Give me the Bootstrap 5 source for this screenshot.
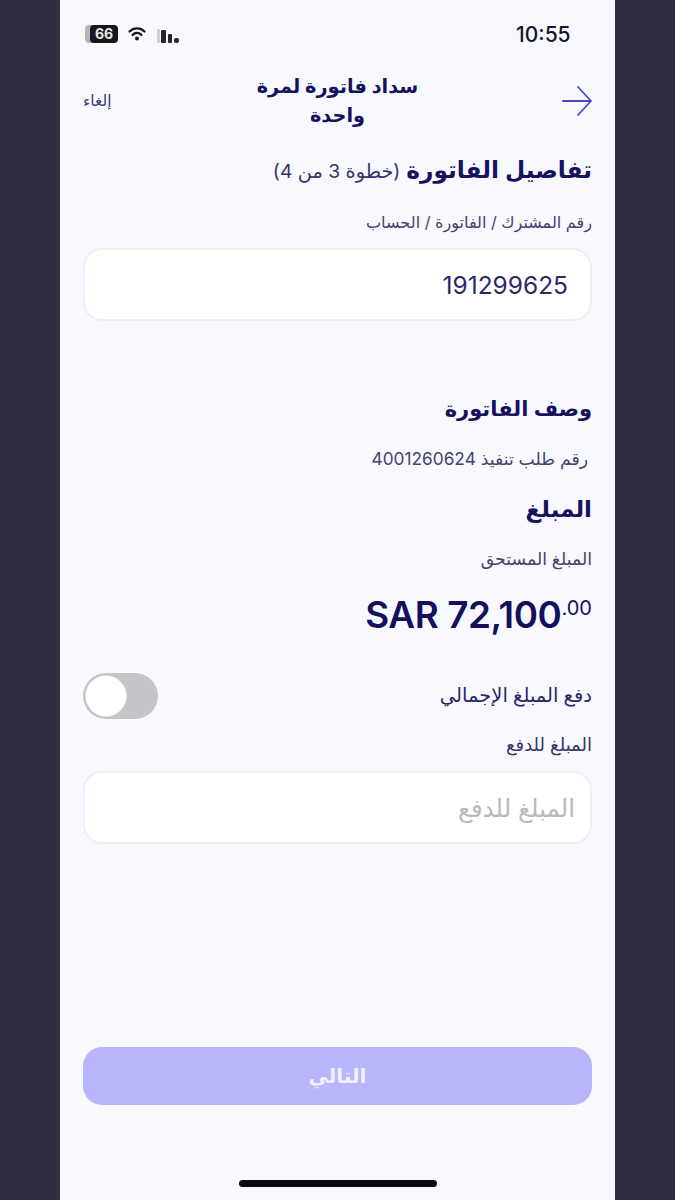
<!DOCTYPE html>
<html lang="ar" dir="rtl">
<head>
  <meta charset="UTF-8">
  <title>سداد فاتورة لمرة واحدة</title>
  <link href="https://cdn.jsdelivr.net/npm/bootstrap@5.3.0/dist/css/bootstrap.min.css" rel="stylesheet">
  <style>
    body { background: #2f2e41; font-family: Inter, "DejaVu Sans", sans-serif; color: #17125e; }
    .phone { width: 555px; height: 1200px; margin: 0 auto; background: #f8f9ff; padding: 0 23px; }
    .status-bar { height: 68px; direction: ltr; }
    .clock { font-size: 21px; font-weight: 500; color: #16162a; width: 76px; margin-top: 1px; }
    .top-head { height: 65px; }
    .back-arrow { width: 30px; flex: none; }
    .page-title { font-size: 19.3px; font-weight: 600; line-height: 29px; width: 190px; text-align: center; margin: 0 auto; }
    .cancel-link { font-size: 15.5px; color: #3d3a74; width: 30px; flex: none; white-space: nowrap; text-align: left; }
    .main-head { font-size: 23.3px; font-weight: 600; line-height: 30px; margin-top: 22px; }
    .sub-head { font-size: 19.3px; font-weight: 400; color: #37346c; }
    .field-label { font-size: 16.1px; line-height: 20px; color: #45436d; }
    .label-first { margin-top: 26px; }
    .label-big { font-size: 17.3px; }
    .label-pay { font-size: 18px; color: #37346c; }
    .row-gap { margin-top: 25px; }
    .field-box.form-control { height: 73px; border: 2px solid #eeeff6; border-radius: 19px; background: #fff; padding: 0 22px; font-size: 24.5px; color: #2c2967; box-shadow: none; }
    .field-box.form-control::placeholder { color: #b9b9c0; }
    .field-box.field-empty { padding: 0 15px; }
    .sec-head { font-size: 21px; font-weight: 600; line-height: 30px; }
    .section-gap { margin-top: 73px; }
    .head-big { font-size: 23px; }
    .amount { font-size: 36.8px; font-weight: 600; line-height: 44px; direction: ltr; text-align: right; color: #14105c; letter-spacing: -0.4px; margin-top: 24px; }
    .amount sup { font-size: 20px; font-weight: 400; top: -13px; letter-spacing: 0; }
    .full-row { margin-top: 36px; }
    .full-label { font-size: 19.5px; font-weight: 500; color: #2b2768; }
    .form-switch { padding: 0; margin: 0; min-height: 0; }
    .form-switch .form-check-input.toggle-off { width: 75px; height: 46px; margin: 0; float: none; display: block; border: 0; background-color: #c5c5c9; border-radius: 23px;
      background-position: left center; background-size: auto 100%;
      background-image: url("data:image/svg+xml,%3csvg xmlns='http://www.w3.org/2000/svg' viewBox='0 0 46 46'%3e%3ccircle cx='23' cy='23' r='20.5' fill='%23fff'/%3e%3c/svg%3e"); }
    .next-btn.btn { height: 58px; border-radius: 19px; background: #b8b5fb; border: 0; color: #f1f0ff; font-size: 20px; font-weight: 600; opacity: 1; flex: none; }
    .home-bar { width: 198px; height: 7px; border-radius: 4px; background: #0c0c12; margin-top: 75px; margin-bottom: 13px; flex: none; }
  </style>
</head>
<body>
<div class="phone d-flex flex-column">

  <!-- شريط الحالة -->
  <div class="status-bar d-flex align-items-center justify-content-between">
    <svg width="100" height="20" viewBox="0 0 100 20" role="img" aria-label="status icons">
      <rect x="2" y="1" width="12" height="18" rx="4" fill="#b4b4b8"/>
      <rect x="7" y="1" width="28" height="18" rx="4" fill="#17171c"/>
      <text x="21" y="15" font-family="Inter, sans-serif" font-size="14" font-weight="700" fill="#e8e8ea" text-anchor="middle">66</text>
      <path d="M46.500 7.500a10.500 10.500 0 0 1 15 0M49.500 11a6 6 0 0 1 9 0" fill="none" stroke="#17171c" stroke-width="2.200" stroke-linecap="round"/>
      <circle cx="54" cy="14.500" r="2" fill="#17171c"/>
      <rect x="74" y="5" width="3" height="14" fill="#d0d0d6"/>
      <rect x="78" y="6" width="5" height="13" rx="1" fill="#26262e"/>
      <rect x="85" y="10" width="4" height="9" rx="1" fill="#26262e"/>
      <rect x="91" y="14" width="5" height="5" rx="2" fill="#26262e"/>
    </svg>
    <div class="clock">10:55</div>
  </div>

  <!-- رأس الصفحة -->
  <div class="top-head d-flex align-items-center">
    <svg class="back-arrow" height="30" viewBox="0 0 30 30" fill="none" stroke="#4a45c9" stroke-width="1.800" stroke-linecap="round" stroke-linejoin="round">
      <path d="M1 15H29M16 1L29 15L16 29"/>
    </svg>
    <div class="page-title">سداد فاتورة لمرة واحدة</div>
    <div class="cancel-link">إلغاء</div>
  </div>

  <div class="main-head">تفاصيل الفاتورة <span class="sub-head">(خطوة 3 من 4)</span></div>
  <div class="field-label label-first">رقم المشترك / الفاتورة / الحساب</div>
  <input class="form-control field-box mt-3" type="text" value="191299625">

  <div class="sec-head section-gap">وصف الفاتورة</div>
  <div class="field-label label-big row-gap pe-1">رقم طلب تنفيذ 4001260624</div>
  <div class="sec-head head-big row-gap">المبلغ</div>
  <div class="field-label label-big row-gap">المبلغ المستحق</div>
  <div class="amount">SAR 72,100<sup>.00</sup></div>

  <div class="d-flex align-items-center justify-content-between full-row">
    <label class="full-label" for="fullAmount">دفع المبلغ الإجمالي</label>
    <div class="form-check form-switch">
      <input class="form-check-input toggle-off" type="checkbox" id="fullAmount">
    </div>
  </div>

  <div class="field-label label-pay mt-3">المبلغ للدفع</div>
  <input class="form-control field-box field-empty mt-3" type="text" placeholder="المبلغ للدفع">

  <button type="button" class="btn next-btn w-100 mt-auto">التالي</button>
  <div class="home-bar mx-auto"></div>
</div>
<script src="https://cdn.jsdelivr.net/npm/bootstrap@5.3.0/dist/js/bootstrap.bundle.min.js"></script>
</body>
</html>
